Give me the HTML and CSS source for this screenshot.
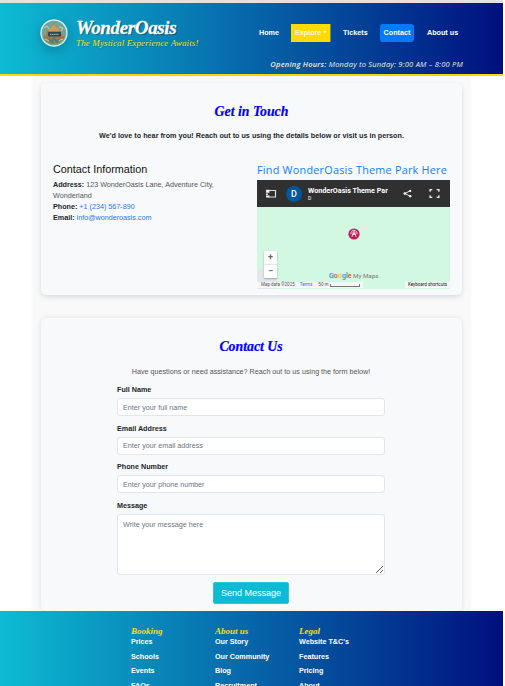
FILE: index.html
```html
<!DOCTYPE html>
<html lang="en">
<head>
<meta charset="utf-8">
<title>WonderOasis - Contact</title>
<link rel="stylesheet" href="styles.css">
</head>
<body>
<div class="page">
<header class="header">
  <div class="brand">
    <svg class="logo" viewBox="0 0 28 28">
      <circle cx="14" cy="14" r="13" fill="#73a49b" stroke="#d9eeee" stroke-width="1.4"/>
      <path d="M3 17h22a11.5 11.5 0 0 1-22 0z" fill="#9a7951"/>
      <path d="M5 18l2-6 3-2 4-6 4 6 3 2 2 6z" fill="#ae7846"/>
      <path d="M8 12l6-7 6 7z" fill="#d09b59"/>
      <path d="M4 9l3-2 2 3M19 8l4 1-2 3M5 20l4 2M18 22l5-2" stroke="#dcc88e" fill="none"/>
      <rect x="8" y="13" width="13" height="4.5" rx="1" fill="#204c50"/>
      <path d="M10 15.3h9" stroke="#b9d1c4" stroke-dasharray="1.5 .6"/>
      <path d="M9 20l3 3 2-4 3 4 2-3" stroke="#36857f" stroke-width="1.5" fill="none"/>
    </svg>
    <div class="brand-text">
      <h1>WonderOasis</h1>
      <p>The Mystical Experience Awaits!</p>
    </div>
  </div>
  <div class="header-right">
    <nav class="nav">
      <a class="home">Home</a>
      <a class="explore">Explore<i class="caret"></i></a>
      <a class="tickets">Tickets</a>
      <a class="contact">Contact</a>
      <a class="about">About us</a>
    </nav>
    <p class="hours"><b>Opening Hours:</b> Monday to Sunday: 9:00 AM – 8:00 PM</p>
  </div>
</header>
<main class="main">
  <section class="card touch">
    <h2>Get in Touch</h2>
    <p class="lead">We'd love to hear from you! Reach out to us using the details below or visit us in person.</p>
    <div class="columns">
      <div class="info">
        <h3>Contact Information</h3>
        <p><b>Address:</b> 123 WonderOasis Lane, Adventure City, Wonderland</p>
        <p><b>Phone:</b> <a>+1 (234) 567-890</a></p>
        <p><b>Email:</b> <a>info@wonderoasis.com</a></p>
      </div>
      <div class="find">
        <h3><span>Find WonderOasis Theme Park Here</span></h3>
        <div class="map">
          <div class="map-bar">
            <svg class="panel-icon" viewBox="0 0 12 10"><path d="M3.500 1.500h7v6.500h-7" fill="none" stroke="#ddd" stroke-width="1.200"/><path d="M1 .8h3.500v3H1zM1 4.500h2v1.500H1zM1 6.500h3.500v2H1z" fill="#eee"/></svg>
            <span class="avatar">D</span>
            <div class="map-title"><b>WonderOasis Theme Par</b><small>D</small></div>
            <svg class="share-icon" viewBox="0 0 10 10"><path d="M8 2L2 5l6 3" stroke="#fff" fill="none"/><circle cx="8" cy="2" r="1.300" fill="#fff"/><circle cx="2" cy="5" r="1.400" fill="#fff"/><circle cx="8" cy="8" r="1.300" fill="#fff"/></svg>
            <svg class="full-icon" viewBox="0 0 10 10"><path d="M1 3.500V1.500h2M7 1.500h2v2M1 6.500v2h2M7 8.500h2v-2" stroke="#eee" stroke-width="1.200" fill="none"/></svg>
          </div>
          <div class="map-body">
            <svg class="pin" viewBox="0 0 12 12"><circle cx="6" cy="6" r="5.600" fill="#c2185b"/><path d="M4 9l.5-2.500M8 9l-.5-2.500M3 6.200a3.100 3.100 0 1 1 6 0M4 6h4M6 3v4M4.300 4l3.400 3M7.700 4L4.300 7" stroke="#fff" stroke-width=".8" fill="none"/></svg>
            <div class="zoom"><span>+</span><span>−</span></div>
            <p class="google"><b><i class="g1">G</i><i class="g2">o</i><i class="g3">o</i><i class="g1">g</i><i class="g4">l</i><i class="g2">e</i></b> My Maps</p>
            <div class="map-foot">
              <p class="legal"><span>Map data ©2025</span><a>Terms</a><span>50 m</span><i class="scale"></i></p>
              <p class="keys">Keyboard shortcuts</p>
            </div>
          </div>
        </div>
      </div>
    </div>
  </section>
  <section class="card form-card">
    <h2>Contact Us</h2>
    <p class="intro">Have questions or need assistance? Reach out to us using the form below!</p>
    <form>
      <label>Full Name</label>
      <input type="text" placeholder="Enter your full name">
      <label>Email Address</label>
      <input type="text" placeholder="Enter your email address">
      <label>Phone Number</label>
      <input type="text" placeholder="Enter your phone number">
      <label>Message</label>
      <textarea placeholder="Write your message here"></textarea>
      <button type="button">Send Message</button>
    </form>
  </section>
</main>
<footer class="footer">
  <div><h4>Booking</h4><a>Prices</a><a>Schools</a><a>Events</a><a>FAQs</a></div>
  <div><h4>About us</h4><a>Our Story</a><a>Our Community</a><a>Blog</a><a>Recruitment</a></div>
  <div><h4>Legal</h4><a>Website T&amp;C's</a><a>Features</a><a>Pricing</a><a>About</a></div>
</footer>
</div>
</body>
</html>
```
FILE: styles.css
```css
* { box-sizing: border-box; margin: 0; padding: 0; }
body { background: #fff; font-family: "Liberation Sans", sans-serif; font-size: 7.2px; color: #212529; overflow: hidden; }
.page { width: 503px; height: 686px; overflow: hidden; border-top: 3px solid #e6e0e2; display: flex; flex-direction: column; }
h1, h2, h4, .brand-text p { font-family: "Liberation Serif", serif; font-style: italic; font-weight: 700; white-space: nowrap; }

.header { height: 73px; flex: none; background: linear-gradient(90deg, #0dbbd3, #00107f); border-bottom: 2px solid #ffdb00; display: flex; justify-content: space-between; padding: 0 40px; }
.brand { display: flex; padding-top: 16px; }
.logo { width: 28px; height: 28px; border-radius: 50%; box-shadow: 0 4px 12px rgba(0, 0, 0, .2); }
.brand-text { margin-left: 8px; }
.brand-text h1 { color: #fff; font-size: 19px; line-height: 17px; letter-spacing: -.35px; -webkit-text-stroke: .3px #fff; text-shadow: 1px 1px 1px rgba(0, 0, 0, .45); }
.brand-text p { color: #ffe000; font-size: 9px; font-weight: 400; line-height: 12px; letter-spacing: .13px; margin-top: 1px; text-shadow: 1px 1px 1px rgba(0, 0, 0, .2); }
.header-right { display: flex; flex-direction: column; align-items: flex-end; }
.nav { display: flex; align-items: center; margin-top: 21px; height: 18px; }
.nav a { color: #fff; font-weight: 700; font-size: 7.2px; height: 18px; line-height: 18px; white-space: nowrap; }
.nav .home { width: 32px; }
.nav .explore { width: 40px; padding-left: 4px; background: #ffdb00; color: #f5f7e6; border-right: 1px solid #6b8a6e; }
.nav .tickets { width: 49px; padding-left: 12px; }
.nav .contact { width: 34px; text-align: center; background: #007bff; border-radius: 3px; }
.nav .about { width: 49px; padding-left: 13px; }
.caret { display: inline-block; margin-left: 2px; vertical-align: 2px; border: 2px solid transparent; border-top-color: #fff; border-bottom: 0; }
.hours { margin-top: 14px; line-height: 16px; color: #f4eadd; font-family: "Open Sans", sans-serif; font-style: italic; font-weight: 500; font-size: 7.5px; letter-spacing: .22px; white-space: nowrap; }
.hours b { font-weight: 600; }

.main { width: 435px; height: 535px; flex: none; margin-left: 34px; padding: 7px 7px 0; background: #f9f9fa; box-shadow: 0 0 4px rgba(0, 0, 0, .08); }
.card { background: #f8f9fb; border-radius: 5px; box-shadow: 0 2px 5px rgba(0, 0, 0, .13); }
.card h2 { color: #00f; font-size: 13.8px; line-height: 18px; padding-top: 1px; height: 18px; text-align: center; -webkit-text-stroke: .2px #00f; }
.touch { height: 212px; padding: 19px 12px 0; }
.lead { margin-top: 10px; line-height: 11px; text-align: center; font-weight: 700; font-size: 7.23px; white-space: nowrap; }
.columns { display: grid; grid-template-columns: 204px 193px; margin-top: 21px; }
h3 { font-weight: 400; font-size: 10.8px; line-height: 15px; white-space: nowrap; }
.info { padding-right: 38px; }
.info h3 { height: 16px; margin-bottom: 1px; color: #111; }
.info p { line-height: 11px; color: #555; }
.info b { color: #212529; }
.info a { color: #2577f5; }
.find h3 { color: #0d80ff; font-family: "Open Sans", sans-serif; font-size: 10.8px; letter-spacing: .25px; margin-bottom: 3px; }
.map { height: 109px; display: flex; flex-direction: column; }
.map-bar { height: 27px; background: #303030; display: flex; align-items: center; color: #fff; }
.panel-icon { width: 12px; height: 10px; margin-left: 8px; }
.avatar { width: 16px; height: 16px; margin-left: 9px; border-radius: 50%; background: #01579b; text-align: center; font: 500 9px/16px Roboto, sans-serif; }
.map-title { width: 84px; margin-left: 6px; font-family: Roboto, sans-serif; white-space: nowrap; }
.map-title b { display: block; font-size: 7.2px; line-height: 9px; font-weight: 700; }
.map-title small { display: block; font-size: 5px; line-height: 6px; }
.share-icon { width: 9px; height: 9px; margin-left: 11px; }
.full-icon { width: 11px; height: 11px; margin-left: 17px; }
.map-body { height: 82px; position: relative; background: radial-gradient(circle at 7px 75px, #e3e6eb 13px, transparent 14px), #d2f8e2; }
.pin { position: absolute; left: 91px; top: 21px; width: 12px; height: 12px; }
.zoom { position: absolute; left: 7px; top: 44px; width: 13px; height: 27px; background: #fff; border-radius: 1px; box-shadow: 0 1px 2px rgba(0, 0, 0, .3); color: #666; display: flex; flex-direction: column; font: 700 9px/13px Roboto, sans-serif; text-align: center; }
.zoom span + span { border-top: 1px solid #e6e6e6; }
.google { position: absolute; left: 72px; top: 64px; font: 6.2px/10px Roboto, sans-serif; color: #777; white-space: nowrap; }
.google b { font-size: 7.1px; font-weight: 500; }
.google i { font-style: normal; }
.g1 { color: #4285f4; } .g2 { color: #ea4335; } .g3 { color: #fbbc05; } .g4 { color: #34a853; }
.map-foot { position: absolute; left: 0; right: 0; bottom: 1px; height: 6px; display: flex; justify-content: space-between; font: 4.5px/6px Roboto, sans-serif; color: #555; white-space: nowrap; }
.legal { width: 106px; padding-left: 4px; background: #f5f7f6; display: flex; align-items: center; }
.legal a { color: #1a73e8; margin: 0 6px 0 5px; }
.scale { width: 30px; height: 3px; margin-left: 2px; border: 1px solid #777; border-top: 0; }
.keys { padding: 0 3px; background: #f5f7f6; color: #111; }

.form-card { height: 293px; margin-top: 23px; padding: 19px 77px 0 76px; box-shadow: 0 0 5px rgba(0, 0, 0, .1); }
.intro { margin-top: 11px; line-height: 11px; color: #555; text-align: center; white-space: nowrap; }
form { display: flex; flex-direction: column; margin-top: 7px; }
label { font-weight: 700; line-height: 11px; margin-bottom: 3px; }
input, textarea { width: 268px; padding: 0 5px; border: 1px solid #e4e6e9; border-radius: 3px; background: #fff; font: 7.2px "Liberation Sans", sans-serif; display: block; outline: 0; }
input { height: 18px; margin-bottom: 6.700px; }
textarea { height: 61px; padding-top: 5px; }
input::placeholder, textarea::placeholder { color: #6c757d; }
button { width: 76px; height: 22px; align-self: center; margin-top: 7px; border: 1px solid #2bc7d8; border-radius: 2px; background: #0dbad3; color: #fff; font: 9px "Liberation Sans", sans-serif; }

.footer { height: 75px; flex: none; background: linear-gradient(90deg, #0dbbd3, #00107f); display: grid; grid-template-columns: 84px 84px 84px; padding: 15px 0 0 131px; overflow: hidden; }
.footer h4 { color: #ffdb12; font-size: 9px; line-height: 10px; }
.footer a { display: block; color: #fff; font-weight: 700; line-height: 11px; height: 14.500px; white-space: nowrap; }
```
